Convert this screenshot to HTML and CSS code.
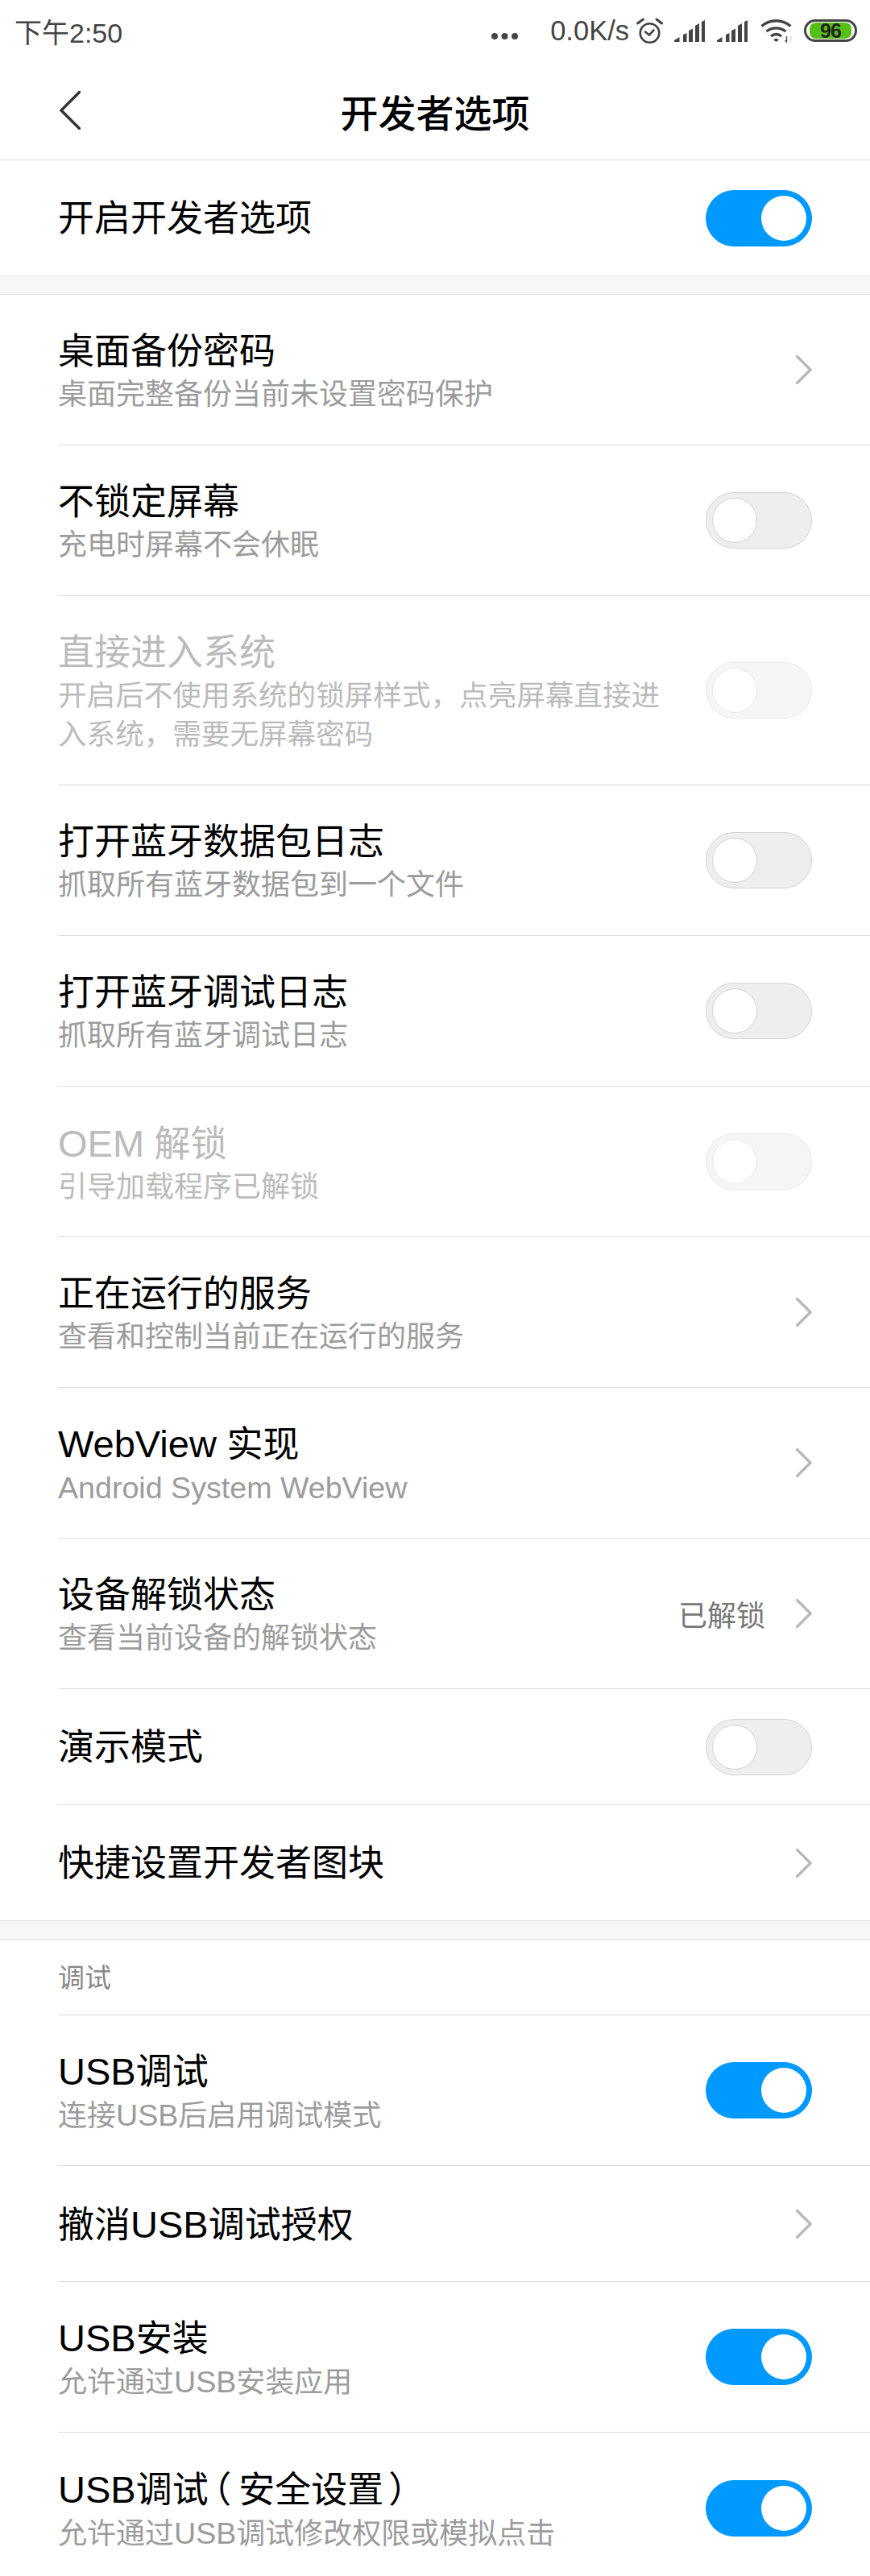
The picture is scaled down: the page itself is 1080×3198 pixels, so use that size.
FILE: index.html
```html
<!DOCTYPE html>
<html lang="zh-CN">
<head>
  <meta charset="UTF-8">
  <title>开发者选项</title>
  <link rel="stylesheet" href="styles.css">
</head>
<body>
  <div class="statusbar">
    <span class="time">下午2:50</span>
    <div class="status-right">
      <svg class="dots" width="33" height="10" viewBox="0 0 33 10"><circle cx="4" cy="5" r="4"/><circle cx="16.500" cy="5" r="4"/><circle cx="29" cy="5" r="4"/></svg>
      <span class="speed">0.0K/s</span>
      <svg class="alarm" width="33" height="33" viewBox="0 0 33 33" fill="none" stroke="#444" stroke-width="2.600"><circle cx="16.500" cy="19" r="11.800"/><path d="M11 17.500l5 4 5.500-6" stroke-linecap="round"/><path d="M1.500 7l7-5M25 2l6.500 5" stroke-width="3" stroke-linecap="round"/></svg>
      <svg class="signal" width="39" height="27" viewBox="0 0 39 27" fill="#444"><path d="M0 27v-2l6.500-4v6zM11 27v-9l4.500-2v11zM18 27v-14l5-2.500v16.500zM26 27v-20l5-3v23zM34 27v-25l4-2v27z"/></svg>
      <svg class="signal" width="39" height="27" viewBox="0 0 39 27" fill="#444"><path d="M0 27v-2l6.500-4v6zM11 27v-9l4.500-2v11zM18 27v-14l5-2.500v16.500zM26 27v-20l5-3v23zM34 27v-25l4-2v27z"/></svg>
      <svg class="wifi" width="41" height="32" viewBox="0 0 41 32" fill="none" stroke="#444" stroke-width="3.400"><path d="M2.500 10.500c10.500-9 25-9 36 0"/><path d="M8.500 17c7-5.500 16.500-5.500 24 0"/><path d="M14 23c4-3 9-3 13 0"/><path d="M17 27.500l3.500-2 3.500 2-3.500 2.500z" fill="#444" stroke="none"/><path d="M33.500 23v7l-2-2" stroke="#555" stroke-width="1.400"/><path d="M38 31v-7l2 2" stroke="#ddd" stroke-width="1.400"/></svg>
      <div class="battery"><span class="battery-fill">96</span></div>
    </div>
  </div>

  <div class="titlebar">
    <svg class="back" width="26" height="48" viewBox="0 0 26 48" fill="none" stroke="#333" stroke-width="3.400" stroke-linecap="round"><path d="M24.500 1.500l-22.500 22.500 22.500 22.500"/></svg>
    <h1>开发者选项</h1>
  </div>

  <div class="row single first">
    <div class="text"><div class="name">开启开发者选项</div></div>
    <span class="switch on"><i></i></span>
  </div>

  <div class="gap"></div>

  <div class="row">
    <div class="text"><div class="name">桌面备份密码</div><div class="sub">桌面完整备份当前未设置密码保护</div></div>
    <svg class="chevron" width="20" height="36" viewBox="0 0 20 36"><path d="M1.500 1.500l16.500 16.500-16.500 16.500"/></svg>
  </div>
  <div class="row">
    <div class="text"><div class="name">不锁定屏幕</div><div class="sub">充电时屏幕不会休眠</div></div>
    <span class="switch"><i></i></span>
  </div>
  <div class="row disabled tall">
    <div class="text"><div class="name">直接进入系统</div><div class="sub">开启后不使用系统的锁屏样式，点亮屏幕直接进入系统，需要无屏幕密码</div></div>
    <span class="switch"><i></i></span>
  </div>
  <div class="row">
    <div class="text"><div class="name">打开蓝牙数据包日志</div><div class="sub">抓取所有蓝牙数据包到一个文件</div></div>
    <span class="switch"><i></i></span>
  </div>
  <div class="row">
    <div class="text"><div class="name">打开蓝牙调试日志</div><div class="sub">抓取所有蓝牙调试日志</div></div>
    <span class="switch"><i></i></span>
  </div>
  <div class="row disabled">
    <div class="text"><div class="name"><span class="en">OEM</span> 解锁</div><div class="sub">引导加载程序已解锁</div></div>
    <span class="switch"><i></i></span>
  </div>
  <div class="row">
    <div class="text"><div class="name">正在运行的服务</div><div class="sub">查看和控制当前正在运行的服务</div></div>
    <svg class="chevron" width="20" height="36" viewBox="0 0 20 36"><path d="M1.500 1.500l16.500 16.500-16.500 16.500"/></svg>
  </div>
  <div class="row">
    <div class="text"><div class="name"><span class="en">WebView</span> 实现</div><div class="sub"><span class="en">Android System WebView</span></div></div>
    <svg class="chevron" width="20" height="36" viewBox="0 0 20 36"><path d="M1.500 1.500l16.500 16.500-16.500 16.500"/></svg>
  </div>
  <div class="row">
    <div class="text"><div class="name">设备解锁状态</div><div class="sub">查看当前设备的解锁状态</div></div>
    <span class="value">已解锁</span>
    <svg class="chevron" width="20" height="36" viewBox="0 0 20 36"><path d="M1.500 1.500l16.500 16.500-16.500 16.500"/></svg>
  </div>
  <div class="row single">
    <div class="text"><div class="name">演示模式</div></div>
    <span class="switch"><i></i></span>
  </div>
  <div class="row single last">
    <div class="text"><div class="name">快捷设置开发者图块</div></div>
    <svg class="chevron" width="20" height="36" viewBox="0 0 20 36"><path d="M1.500 1.500l16.500 16.500-16.500 16.500"/></svg>
  </div>

  <div class="gap"></div>

  <div class="category"><span>调试</span></div>

  <div class="row">
    <div class="text"><div class="name"><span class="en">USB</span>调试</div><div class="sub">连接<span class="en">USB</span>后启用调试模式</div></div>
    <span class="switch on"><i></i></span>
  </div>
  <div class="row single">
    <div class="text"><div class="name">撤消<span class="en">USB</span>调试授权</div></div>
    <svg class="chevron" width="20" height="36" viewBox="0 0 20 36"><path d="M1.500 1.500l16.500 16.500-16.500 16.500"/></svg>
  </div>
  <div class="row">
    <div class="text"><div class="name"><span class="en">USB</span>安装</div><div class="sub">允许通过<span class="en">USB</span>安装应用</div></div>
    <span class="switch on"><i></i></span>
  </div>
  <div class="row">
    <div class="text"><div class="name"><span class="en">USB</span>调试<span class="paren-open">（</span>安全设置<span class="paren-close">）</span></div><div class="sub">允许通过<span class="en">USB</span>调试修改权限或模拟点击</div></div>
    <span class="switch on"><i></i></span>
  </div>
</body>
</html>
```

FILE: styles.css
```css
* {
  box-sizing: border-box;
}

html, body {
  margin: 0;
  height: 3198px;
  overflow: hidden;
  background: #fff;
}

body {
  font-family: "Liberation Sans", "Noto Sans CJK SC", sans-serif;
  color: #000;
}

.statusbar {
  height: 76px;
  padding: 0 16px 0 18px;
  display: flex;
  justify-content: space-between;
  align-items: center;
  color: #444;
}

.time {
  font-size: 34px;
}

.status-right {
  display: flex;
  align-items: center;
}

.dots {
  fill: #444;
  margin: 14px 40px 0 0;
}

.speed {
  font-size: 34.500px;
  margin-right: 9px;
}

.alarm {
  margin-right: 14px;
}

.signal {
  margin-right: 14px;
}

.wifi {
  margin-right: 14px;
}

.battery {
  width: 66px;
  height: 28px;
  border: 3px solid #444;
  border-radius: 14px;
  padding: 1px 4px;
}

.battery-fill {
  display: block;
  height: 100%;
  background: #56bf15;
  border-radius: 8px;
  color: #222;
  font-size: 25px;
  font-weight: 700;
  line-height: 20px;
  letter-spacing: -1px;
  text-align: center;
}

.titlebar {
  height: 123px;
  display: flex;
  align-items: center;
  justify-content: center;
  position: relative;
  border-bottom: 1px solid #dcdcdc;
}

.titlebar h1 {
  margin: 0;
  font-size: 47px;
  font-weight: 500;
}

.back {
  position: absolute;
  left: 74px;
  top: 37px;
}

.row {
  height: 187px;
  margin-left: 72px;
  padding-right: 72px;
  display: flex;
  align-items: center;
  border-bottom: 1px solid #dcdcdc;
}

.row.single {
  height: 144px;
}

.row.tall {
  height: 235px;
}

.row.first {
  margin-left: 0;
  padding-left: 72px;
}

.row.first,
.row.last {
  height: 143px;
  border-bottom: none;
}

.row:last-child {
  border-bottom: none;
}

.text {
  flex: 1;
  min-width: 0;
}

.name {
  font-size: 45px;
  line-height: 66px;
}

.single .name {
  padding-top: 3px;
}

.sub {
  font-size: 36px;
  line-height: 48px;
  margin-top: -4px;
  color: #9c9c9c;
  padding-right: 30px;
}

.tall .sub {
  font-size: 35.600px;
}

.en {
  font-size: 1.045em;
}

.paren-open,
.paren-close {
  font-feature-settings: "halt";
}

.paren-open {
  margin-left: 6px;
  margin-right: 9px;
}

.paren-close {
  margin-left: 6px;
}

.disabled .name,
.disabled .sub {
  color: #bbb;
}

.value {
  font-size: 36px;
  color: #777;
  margin-right: 38px;
}

.chevron {
  fill: none;
  stroke: #b9b9b9;
  stroke-width: 3.400;
  stroke-linecap: round;
  flex: none;
}

.gap {
  height: 24px;
  background: #f7f7f7;
  border-top: 1px solid #e4e4e4;
  border-bottom: 1px solid #e4e4e4;
}

.category {
  height: 94px;
  margin-left: 72px;
  padding-bottom: 3px;
  display: flex;
  align-items: center;
  border-bottom: 1px solid #dcdcdc;
  font-size: 33px;
  color: #888;
}

.switch {
  flex: none;
  width: 132px;
  height: 70px;
  padding: 0 7px;
  display: flex;
  align-items: center;
  border-radius: 35px;
  border: 1px solid #d3d3d3;
  background: #eee;
}

.switch i {
  display: block;
  width: 56px;
  height: 56px;
  border-radius: 50%;
  background: #fff;
  border: 1px solid #d3d3d3;
}

.switch.on {
  justify-content: flex-end;
  background: #0099ff;
  border-color: #0099ff;
  padding: 0 6px;
}

.switch.on i {
  border: none;
}

.disabled .switch {
  opacity: 0.5;
}
```
